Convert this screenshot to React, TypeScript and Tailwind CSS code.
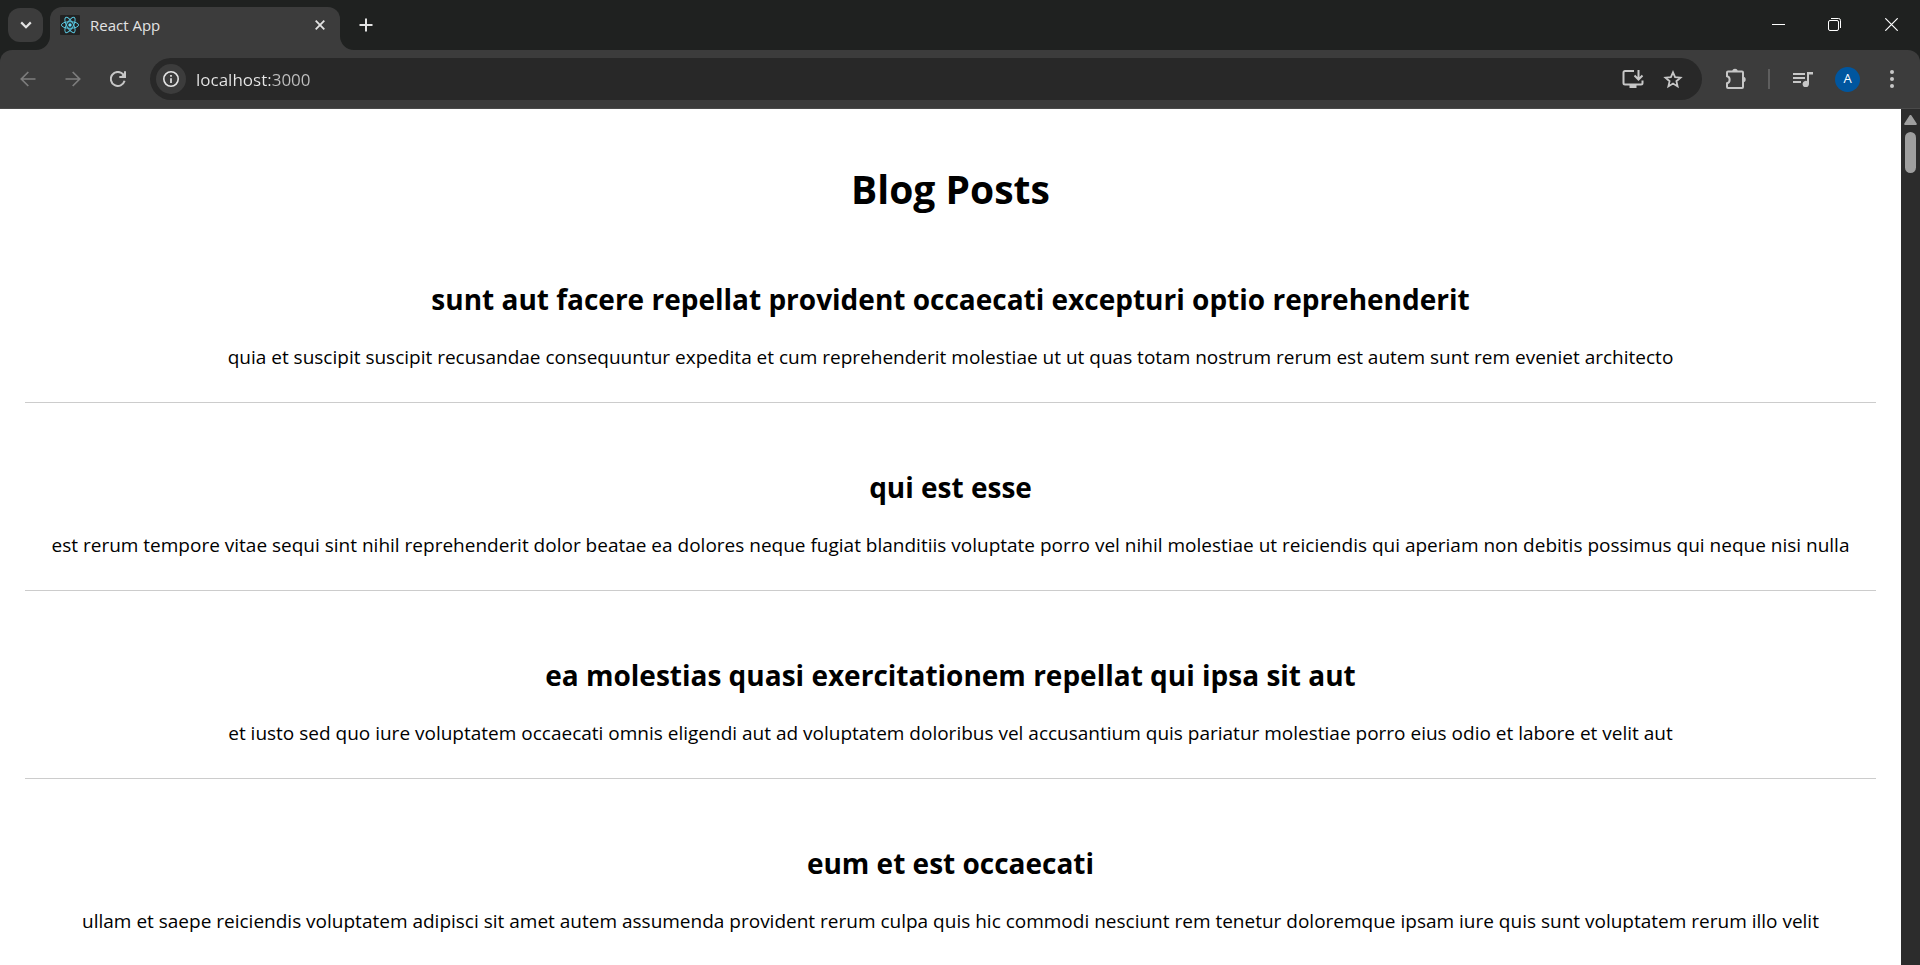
import React from "react";

const posts = [
  {
    title: "sunt aut facere repellat provident occaecati excepturi optio reprehenderit",
    body: "quia et suscipit suscipit recusandae consequuntur expedita et cum reprehenderit molestiae ut ut quas totam nostrum rerum est autem sunt rem eveniet architecto",
  },
  {
    title: "qui est esse",
    body: "est rerum tempore vitae sequi sint nihil reprehenderit dolor beatae ea dolores neque fugiat blanditiis voluptate porro vel nihil molestiae ut reiciendis qui aperiam non debitis possimus qui neque nisi nulla",
  },
  {
    title: "ea molestias quasi exercitationem repellat qui ipsa sit aut",
    body: "et iusto sed quo iure voluptatem occaecati omnis eligendi aut ad voluptatem doloribus vel accusantium quis pariatur molestiae porro eius odio et labore et velit aut",
  },
  {
    title: "eum et est occaecati",
    body: "ullam et saepe reiciendis voluptatem adipisci sit amet autem assumenda provident rerum culpa quis hic commodi nesciunt rem tenetur doloremque ipsam iure quis sunt voluptatem rerum illo velit",
  },
];

function ReactLogo() {
  return (
    <svg viewBox="0 0 20 20" className="size-5 shrink-0" aria-hidden="true">
      <rect width="20" height="20" rx="1" fill="#222222" />
      <g fill="none" stroke="#58c4dc" strokeWidth="1">
        <ellipse cx="10" cy="10" rx="8.6" ry="3.3" />
        <ellipse cx="10" cy="10" rx="8.6" ry="3.3" transform="rotate(60 10 10)" />
        <ellipse cx="10" cy="10" rx="8.6" ry="3.3" transform="rotate(120 10 10)" />
      </g>
      <circle cx="10" cy="10" r="1.7" fill="#61dafb" />
    </svg>
  );
}

function TabStrip() {
  return (
    <div className="flex h-[50px] items-start bg-[#1f2120] text-[#e3e3e3]">
      <button type="button" aria-label="Search tabs" className="mt-2 ml-2 flex h-[34px] w-[35px] items-center justify-center rounded-xl bg-[#3c3c3c]">
        <svg viewBox="0 0 12 8" className="h-2 w-3" fill="none" stroke="currentColor" strokeWidth="2.2">
          <path d="M1.2 1.4 6 6.2l4.8-4.8" />
        </svg>
      </button>
      <div className="relative ml-[7px] flex h-[43px] w-[290px] items-center self-end rounded-t-xl bg-[#3c3c3c] pr-3 pb-2 pl-[10px]">
        <svg viewBox="0 0 14 14" className="absolute bottom-0 -left-[14px] size-[14px]" fill="#3c3c3c" aria-hidden="true">
          <path d="M14 0v14H0A14 14 0 0 0 14 0z" />
        </svg>
        <ReactLogo />
        <span className="ml-[10px] flex-1 text-[15px] leading-5">React App</span>
        <button type="button" aria-label="Close tab" className="flex size-4 items-center justify-center">
          <svg viewBox="0 0 10 10" className="size-[10px]" fill="none" stroke="currentColor" strokeWidth="1.8">
            <path d="m.7.7 8.6 8.6M9.3.7.7 9.3" />
          </svg>
        </button>
        <svg viewBox="0 0 14 14" className="absolute -right-[14px] bottom-0 size-[14px]" fill="#3c3c3c" aria-hidden="true">
          <path d="M0 0v14h14A14 14 0 0 1 0 0z" />
        </svg>
      </div>
      <button type="button" aria-label="New tab" className="mt-[11px] ml-3 flex size-7 items-center justify-center">
        <svg viewBox="0 0 14 14" className="size-[14px]" fill="none" stroke="currentColor" strokeWidth="2">
          <path d="M7 .5v13M.5 7h13" />
        </svg>
      </button>
      <div className="ml-auto flex h-[49px] text-white">
        <button type="button" aria-label="Minimize" className="flex w-14 items-center justify-center">
          <svg viewBox="0 0 13 13" className="size-[13px]" fill="currentColor">
            <path d="M0 6h13v1H0z" />
          </svg>
        </button>
        <button type="button" aria-label="Restore" className="flex w-14 items-center justify-center">
          <svg viewBox="0 0 13 13" className="size-[13px]" fill="none" stroke="currentColor" strokeWidth="1">
            <rect x=".5" y="2.5" width="10" height="10" rx="1.5" />
            <path d="M3 .5h7.5a2 2 0 0 1 2 2V10" />
          </svg>
        </button>
        <button type="button" aria-label="Close" className="flex w-[58px] items-center justify-center">
          <svg viewBox="0 0 13 13" className="size-[13px]" fill="none" stroke="currentColor" strokeWidth="1.2">
            <path d="m.3.3 12.4 12.4M12.7.3.3 12.7" />
          </svg>
        </button>
      </div>
    </div>
  );
}

function Toolbar() {
  return (
    <div className="bg-[#1f2120]">
      <div className="flex h-[59px] items-center rounded-t-xl border-b border-[#4a4a4a] bg-[#3c3c3c] text-[#c7c7c7]">
        <button type="button" aria-label="Back" className="ml-4 flex size-6 items-center justify-center text-[#7d7d7d]">
          <svg viewBox="0 0 16 16" className="size-4" fill="none" stroke="currentColor" strokeWidth="1.7">
            <path d="M15.5 8H1.5M8.3 1 1.3 8l7 7" />
          </svg>
        </button>
        <button type="button" aria-label="Forward" className="ml-[21px] flex size-6 items-center justify-center text-[#7d7d7d]">
          <svg viewBox="0 0 16 16" className="size-4" fill="none" stroke="currentColor" strokeWidth="1.7">
            <path d="M.5 8h14M7.7 1l7 7-7 7" />
          </svg>
        </button>
        <button type="button" aria-label="Reload" className="ml-[21px] flex size-6 items-center justify-center">
          <svg viewBox="0 0 16 16" className="size-4" fill="none" stroke="currentColor" strokeWidth="2">
            <path d="M14.6 9.8A7 7 0 1 1 13.2 3.400L14.500 5" />
            <path d="M15 .3v5.700H9.300" />
            <path d="M15.500.8v5.200h-5z" fill="currentColor" stroke="none" />
          </svg>
        </button>
        <div className="ml-5 flex h-[42px] flex-1 items-center rounded-full bg-[#282828] pl-[6px]">
          <button type="button" aria-label="View site information" className="flex size-[30px] shrink-0 items-center justify-center rounded-full bg-[#3c3c3c] text-[#e3e3e3]">
            <svg viewBox="0 0 16 16" className="size-4" fill="none" stroke="currentColor">
              <circle cx="8" cy="8" r="7.2" strokeWidth="1.6" />
              <path d="M8 7.2V12M8 4.1v1.700" strokeWidth="1.7" />
            </svg>
          </button>
          <input
            aria-label="Address"
            defaultValue="localhost:3000"
            className="ml-[10px] h-7 min-w-0 flex-1 bg-[linear-gradient(90deg,#e8e8e8_74px,#c0c0c0_74px)] bg-clip-text text-[17px] text-transparent caret-white outline-none"
          />
          <button type="button" aria-label="Install app" className="flex size-6 items-center justify-center">
            <svg viewBox="0 0 22 18" className="h-[18px] w-[22px]" fill="none" stroke="currentColor" strokeWidth="2">
              <path d="M12 1H3a1.500 1.500 0 0 0-1.500 1.500V13A1.500 1.500 0 0 0 3 14.500h16a1.500 1.500 0 0 0 1.500-1.500v-2.500" />
              <path d="M16.500 0v9M12.500 5.500l4 4 4-4" />
              <path d="M7.500 14.500h7V18h-7z" fill="currentColor" stroke="none" />
            </svg>
          </button>
          <button type="button" aria-label="Bookmark this tab" className="mr-[17px] ml-4 flex size-6 items-center justify-center">
            <svg viewBox="0 0 20 19" className="h-[19px] w-5" fill="none" stroke="currentColor" strokeWidth="1.8">
              <path d="m10 2.300 2.100 4.900 5.400.5-4.100 3.500 1.200 5.200L10 13.600l-4.600 2.800 1.200-5.200L2.500 7.700l5.400-.5z" />
            </svg>
          </button>
        </div>
        <button type="button" aria-label="Extensions" className="ml-[22px] flex size-6 items-center justify-center">
          <svg viewBox="0 0 22 22" className="size-[22px]" fill="none" stroke="currentColor" strokeWidth="2">
            <path d="M3.500 3.500H17a1 1 0 0 1 1 1V19a1 1 0 0 1-1 1H3a1 1 0 0 1-1-1v-3.800c3.500-.7 3.500-6.200 0-7V4.500a1 1 0 0 1 1-1z" />
            <path d="M7.300 3.500a2.700 2.700 0 0 1 5.400 0zM18 8.800a2.700 2.700 0 0 1 0 5.400z" fill="currentColor" stroke="none" />
          </svg>
        </button>
        <div className="ml-5 h-5 w-[2px] bg-[#5e5e5e]" />
        <button type="button" aria-label="Media controls" className="ml-[21px] flex size-6 items-center justify-center">
          <svg viewBox="0 0 20 15" className="h-[15px] w-5" fill="currentColor">
            <path d="M0 1h12v2H0zM0 5h12v2H0zM0 9h8v2H0zM14 0h6v2.500h-4V12a3.200 3.200 0 1 1-2-2.900z" />
          </svg>
        </button>
        <button type="button" aria-label="Profile" className="ml-5 flex size-[25px] items-center justify-center rounded-full bg-[#00569f] text-[13px] text-white">
          A
        </button>
        <button type="button" aria-label="Menu" className="mr-4 ml-5 flex size-6 items-center justify-center">
          <svg viewBox="0 0 4 18" className="h-[18px] w-1" fill="currentColor">
            <circle cx="2" cy="2" r="2" />
            <circle cx="2" cy="9" r="2" />
            <circle cx="2" cy="16" r="2" />
          </svg>
        </button>
      </div>
    </div>
  );
}

export default function App() {
  return (
    <div className="flex h-screen flex-col overflow-hidden bg-white font-['Open_Sans',sans-serif]">
      <TabStrip />
      <Toolbar />
      <div className="flex min-h-0 flex-1">
        <main className="min-w-0 flex-1 overflow-hidden px-[25px] pt-[53px] text-center text-black">
          <h1 className="text-[39px] leading-[53px] font-bold">Blog Posts</h1>
          {posts.map((post) => (
            <article key={post.title} className="border-b border-[#cccccc] pt-16 pb-[31px]">
              <h2 className="text-[28px] leading-10 font-bold">{post.title}</h2>
              <p className="mt-6 text-[19px] leading-7">{post.body}</p>
            </article>
          ))}
        </main>
        <div className="flex w-[19px] flex-col items-center bg-[#2c2c2c] pt-[6px]" aria-hidden="true">
          <svg viewBox="0 0 13 10" className="h-[10px] w-[13px]" fill="#9f9f9f">
            <path d="M5.500.6a1.200 1.200 0 0 1 2 0l5 7.600a1.100 1.100 0 0 1-1 1.800h-10a1.100 1.100 0 0 1-1-1.800z" />
          </svg>
          <div className="mt-[7px] h-[41px] w-[11px] rounded-full bg-[#9f9f9f]" />
        </div>
      </div>
    </div>
  );
}
